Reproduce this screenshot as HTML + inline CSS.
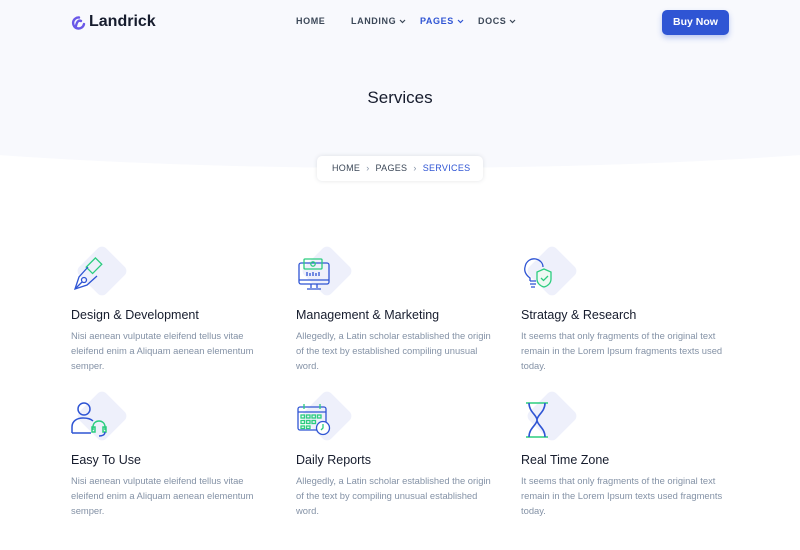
<!DOCTYPE html>
<html><head><meta charset="utf-8"><style>
*{margin:0;padding:0;box-sizing:border-box}
body{width:800px;height:550px;overflow:hidden;background:#fff;font-family:"Liberation Sans",sans-serif;position:relative}
.hero{position:absolute;left:0;top:0;width:800px;height:130px;background:#f8f9fd}
.curve{position:absolute;left:-300px;top:24px;width:1400px;height:144px;border-radius:50%;background:#f8f9fd}
.logo{position:absolute;left:71px;top:13px;font-size:16px;font-weight:bold;color:#161c2d;display:flex;align-items:center;gap:3px}
.nav{position:absolute;top:16px;font-size:9px;letter-spacing:.6px;color:#3c4858;font-weight:bold}
.nav svg{vertical-align:middle;margin-left:3px}
.btn{position:absolute;left:662px;top:10px;width:67px;height:25px;background:#2f55d4;border-radius:5px;color:#fff;font-size:10.5px;font-weight:bold;text-align:center;line-height:25px;box-shadow:0 3px 6px rgba(47,85,212,.3)}
h1{position:absolute;left:0;width:800px;top:88px;text-align:center;font-size:17px;font-weight:normal;color:#161c2d}
.bc{position:absolute;left:317px;top:156px;width:166px;height:25px;background:#fff;border-radius:5px;box-shadow:0 0 4px rgba(60,72,88,.15);font-size:9px;color:#3c4858;letter-spacing:.3px;line-height:25px;padding-left:15px;white-space:nowrap}
.bc span{margin:0 6px;color:#8492a6}
.card{position:absolute;width:215px}
.dia{position:absolute;width:38px;height:38px;background:#eef0fb;border-radius:6px;transform:rotate(45deg)}
.card h3{position:absolute;top:61px;left:0;font-size:12.5px;font-weight:normal;color:#161c2d;white-space:nowrap}
.card p{position:absolute;top:81px;left:0;width:230px;white-space:nowrap;font-size:9.4px;line-height:15px;color:#8492a6}
.card svg.ic{position:absolute;left:0;top:8px}
</style></head><body>
<div class="hero"></div><div class="curve"></div>
<div class="logo"><svg width="15" height="15" viewBox="0 0 15 15"><path d="M8 2.5 A5.5 5.5 0 1 0 13 9" fill="none" stroke="#6a58e8" stroke-width="2.4" stroke-linecap="round"/><path d="M5 11 C6 6 8 5 10 6" fill="none" stroke="#6a58e8" stroke-width="2.4" stroke-linecap="round"/></svg>Landrick</div>
<div class="nav" style="left:296px">HOME</div>
<div class="nav" style="left:351px">LANDING<svg width="7" height="5"><path d="M1 1l2.5 2.5L6 1" fill="none" stroke="#3c4858" stroke-width="1.2"/></svg></div>
<div class="nav" style="left:420px;color:#2f55d4">PAGES<svg width="7" height="5"><path d="M1 1l2.5 2.5L6 1" fill="none" stroke="#2f55d4" stroke-width="1.2"/></svg></div>
<div class="nav" style="left:478px">DOCS<svg width="7" height="5"><path d="M1 1l2.5 2.5L6 1" fill="none" stroke="#3c4858" stroke-width="1.2"/></svg></div>
<div class="btn">Buy Now</div>
<h1>Services</h1>
<div class="bc">HOME<span>›</span>PAGES<span>›</span><b style="color:#2f55d4;font-weight:normal">SERVICES</b></div>

<div class="card" style="left:71px;top:247px"><div class="dia" style="left:12px;top:5px"></div>
<svg class="ic" width="38" height="38" viewBox="0 0 38 38" fill="none" stroke-width="1.3"><rect x="19" y="4" width="9" height="13" transform="rotate(45 23 10)" stroke="#2bcd7f"/><path d="M17 12 L8 22 L4 34 L16 30 L26 21" stroke="#2f55d4"/><circle cx="13" cy="25" r="2.5" stroke="#2f55d4"/><path d="M4 34 L11 27" stroke="#2f55d4"/></svg>
<h3>Design &amp; Development</h3><p>Nisi aenean vulputate eleifend tellus vitae<br>eleifend enim a Aliquam aenean elementum<br>semper.</p></div>

<div class="card" style="left:296px;top:247px"><div class="dia" style="left:12px;top:5px"></div>
<svg class="ic" width="38" height="38" viewBox="0 0 38 38" fill="none" stroke-width="1.3"><rect x="3" y="8" width="30" height="21" rx="2" stroke="#2f55d4"/><path d="M3 25h30M15 29v4M21 29v4M11 34h14" stroke="#2f55d4"/><rect x="8" y="4" width="18" height="10" rx="1" stroke="#2bcd7f"/><circle cx="17" cy="9" r="2.2" stroke="#2bcd7f"/><path d="M11 17v4M14 18v3M17 17v4M20 18v3M23 17v4" stroke="#2f55d4"/></svg>
<h3>Management &amp; Marketing</h3><p>Allegedly, a Latin scholar established the origin<br>of the text by established compiling unusual<br>word.</p></div>

<div class="card" style="left:521px;top:247px"><div class="dia" style="left:12px;top:5px"></div>
<svg class="ic" width="38" height="38" viewBox="0 0 38 38" fill="none" stroke-width="1.3"><path d="M9 26 v-3 C5 20 3 16 4 12 C5 6 10 3 15 4 C19 5 22 8 22 12" stroke="#2f55d4"/><path d="M9 26h6M9 29h6M10 32h4" stroke="#2f55d4"/><path d="M23 14 L30 17 V24 C30 28 27 31 23 32 C19 31 16 28 16 24 V17 Z" stroke="#2bcd7f" fill="#eef9f3"/><path d="M20 23l2.5 2.5L27 21" stroke="#2bcd7f"/></svg>
<h3>Stratagy &amp; Research</h3><p>It seems that only fragments of the original text<br>remain in the Lorem Ipsum fragments texts used<br>today.</p></div>

<div class="card" style="left:71px;top:392px"><div class="dia" style="left:12px;top:5px"></div>
<svg class="ic" width="38" height="38" viewBox="0 0 38 38" fill="none" stroke-width="1.5"><circle cx="13" cy="9" r="6" stroke="#2f55d4"/><path d="M1 33 V27 C1 21 6 18 12 18 C17 18 20 19 22 21" stroke="#2f55d4"/><path d="M1 33 H20" stroke="#2f55d4"/><path d="M22 30 V27 C22 23 25 21 28 21 C31 21 34 23 34 27 V30" stroke="#2bcd7f"/><rect x="21" y="27" width="3" height="5" stroke="#2bcd7f"/><rect x="32" y="27" width="3" height="5" stroke="#2bcd7f"/><path d="M34 32 C34 35 31 36 28 36" stroke="#2f55d4"/></svg>
<h3>Easy To Use</h3><p>Nisi aenean vulputate eleifend tellus vitae<br>eleifend enim a Aliquam aenean elementum<br>semper.</p></div>

<div class="card" style="left:296px;top:392px"><div class="dia" style="left:12px;top:5px"></div>
<svg class="ic" width="38" height="38" viewBox="0 0 38 38" fill="none" stroke-width="1.3"><rect x="2" y="7" width="28" height="23" rx="2" stroke="#2f55d4"/><path d="M2 12h28" stroke="#2f55d4"/><path d="M8 4v5M24 4v5" stroke="#2bcd7f"/><g stroke="#2bcd7f"><rect x="5" y="15" width="3.5" height="3"/><rect x="10.5" y="15" width="3.5" height="3"/><rect x="16" y="15" width="3.5" height="3"/><rect x="21.5" y="15" width="3.5" height="3"/><rect x="5" y="20.5" width="3.5" height="3"/><rect x="10.5" y="20.5" width="3.5" height="3"/><rect x="16" y="20.5" width="3.5" height="3"/><rect x="5" y="26" width="3.5" height="2.5"/><rect x="10.5" y="26" width="3.5" height="2.5"/></g><circle cx="27" cy="28" r="6.5" stroke="#2f55d4" fill="#fff"/><path d="M27 24v4l-2 2" stroke="#2bcd7f"/></svg>
<h3>Daily Reports</h3><p>Allegedly, a Latin scholar established the origin<br>of the text by compiling unusual established<br>word.</p></div>

<div class="card" style="left:521px;top:392px"><div class="dia" style="left:12px;top:5px"></div>
<svg class="ic" width="38" height="38" viewBox="0 0 38 38" fill="none" stroke-width="1.6"><path d="M5 3h22M5 37h22" stroke="#2bcd7f"/><path d="M8 3 C8 12 16 15 16 20 C16 25 8 28 8 37 M24 3 C24 12 16 15 16 20 C16 25 24 28 24 37" stroke="#2f55d4"/></svg>
<h3>Real Time Zone</h3><p>It seems that only fragments of the original text<br>remain in the Lorem Ipsum texts used fragments<br>today.</p></div>
</body></html>
